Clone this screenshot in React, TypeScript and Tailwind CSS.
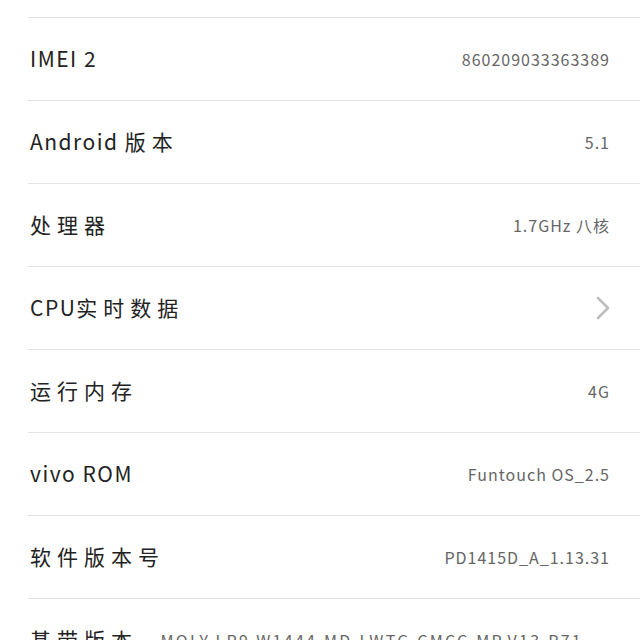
const rows: { label: string; value?: string; arrow?: boolean }[] = [
  { label: "IMEI 2", value: "860209033363389" },
  { label: "Android 版本", value: "5.1" },
  { label: "处理器", value: "1.7GHz 八核" },
  { label: "CPU实时数据", arrow: true },
  { label: "运行内存", value: "4G" },
  { label: "vivo ROM", value: "Funtouch OS_2.5" },
  { label: "软件版本号", value: "PD1415D_A_1.13.31" },
  { label: "基带版本", value: "MOLY.LR9.W1444.MD.LWTG.CMCC.MP.V13.P71" },
];

const font = {
  fontFamily: '"Noto Sans CJK SC", "Liberation Sans", sans-serif',
};

// split into latin / CJK runs so each gets its own spacing
const Label = ({ text }: { text: string }) => {
  const parts = text.match(/[\u4e00-\u9fff]+|[^\u4e00-\u9fff]+/g) || [];
  return (
    <span className="text-[#222] whitespace-nowrap">
      {parts.map((p, i) =>
        /[\u4e00-\u9fff]/.test(p) ? (
          <span key={i} className="text-[21px] tracking-[6px]">
            {p}
          </span>
        ) : (
          <span key={i} className="text-[21px] tracking-[1.5px]">
            {p}
          </span>
        )
      )}
    </span>
  );
};

const App = () => {
  return (
    <div className="w-[640px] h-[640px] overflow-hidden bg-white" style={font}>
      <div className="h-[17px]" />
      {rows.map((row, idx) => (
        <div key={row.label} className="ml-[28px] border-t border-[#e3e3e3]">
          <div className="h-[82px] flex items-center justify-between pl-[2px] pr-[30px]">
            <Label text={row.label} />
            {row.arrow ? (
              <svg
                width="14"
                height="24"
                viewBox="0 0 14 24"
                fill="none"
                stroke="#bdbdbd"
                strokeWidth="2.5"
                strokeLinecap="round"
                strokeLinejoin="round"
              >
                <path d="M2 2l10 10L2 22" />
              </svg>
            ) : idx === rows.length - 1 ? (
              <span className="text-[16px] tracking-[2.3px] text-[#666] whitespace-nowrap mr-[27px]">
                {row.value}
              </span>
            ) : (
              <span className="text-[16px] tracking-[1px] text-[#666] whitespace-nowrap">
                {row.value}
              </span>
            )}
          </div>
        </div>
      ))}
    </div>
  );
};

export default App;
